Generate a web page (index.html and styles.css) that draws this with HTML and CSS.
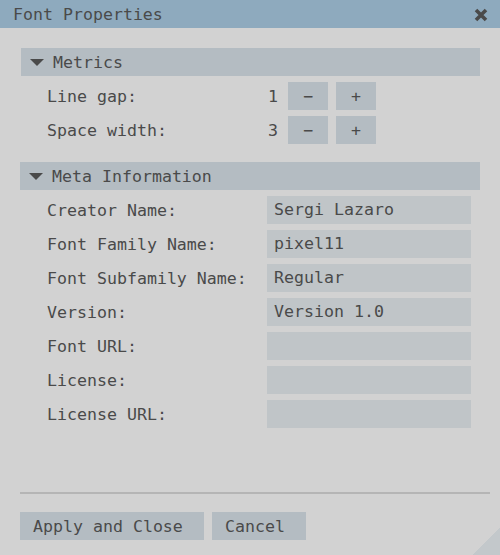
FILE: index.html
```html
<!DOCTYPE html>
<html lang="en">

<head>
    <meta charset="UTF-8">
    <meta name="viewport" content="width=device-width, initial-scale=1.0">
    <title>Font Properties</title>
    <link rel="stylesheet" href="styles.css">
</head>

<body>

    <div class="dialog">

        <!-- Title bar -->
        <div class="titlebar">
            <span class="title">Font Properties</span>
            <svg class="close" width="14" height="14" viewBox="0 0 14 14">
                <path d="M2 2 L12 12 M12 2 L2 12" stroke="#4a4a4a" stroke-width="3.6" fill="none" />
            </svg>
        </div>

        <div class="content">

            <!-- Metrics -->
            <section class="group group-metrics">
                <div class="group-head">
                    <svg class="arrow" width="14" height="7" viewBox="0 0 14 7"><polygon points="0,0 14,0 7,7" fill="#4a4a4a" /></svg>
                    <span>Metrics</span>
                </div>
                <div class="rows">
                    <div class="row">
                        <span class="label">Line gap:</span>
                        <div class="stepper">
                            <span class="num">1</span>
                            <button class="btn btn-step">&minus;</button>
                            <button class="btn btn-step">+</button>
                        </div>
                    </div>
                    <div class="row">
                        <span class="label">Space width:</span>
                        <div class="stepper">
                            <span class="num">3</span>
                            <button class="btn btn-step">&minus;</button>
                            <button class="btn btn-step">+</button>
                        </div>
                    </div>
                </div>
            </section>

            <!-- Meta information -->
            <section class="group group-meta">
                <div class="group-head">
                    <svg class="arrow" width="14" height="7" viewBox="0 0 14 7"><polygon points="0,0 14,0 7,7" fill="#4a4a4a" /></svg>
                    <span>Meta Information</span>
                </div>
                <div class="rows">
                    <div class="row"><span class="label">Creator Name:</span><div class="field">Sergi Lazaro</div></div>
                    <div class="row"><span class="label">Font Family Name:</span><div class="field">pixel11</div></div>
                    <div class="row"><span class="label">Font Subfamily Name:</span><div class="field">Regular</div></div>
                    <div class="row"><span class="label">Version:</span><div class="field">Version 1.0</div></div>
                    <div class="row"><span class="label">Font URL:</span><div class="field"></div></div>
                    <div class="row"><span class="label">License:</span><div class="field"></div></div>
                    <div class="row"><span class="label">License URL:</span><div class="field"></div></div>
                </div>
            </section>
        </div>

        <!-- Footer -->
        <div class="footer">
            <div class="separator"></div>
            <div class="actions">
                <button class="btn btn-apply">Apply and Close</button>
                <button class="btn btn-cancel">Cancel</button>
            </div>
        </div>

        <div class="grip"></div>
    </div>

</body>
</html>
```

FILE: styles.css
```css
:root {
    --bg:       #d2d2d2;
    --title:    #8eaabe;
    --head:     #b4bcc2;
    --field:    #c0c5c8;
    --line:     #b5b5b5;
    --text:     #4a4a4a;
}

* {
    box-sizing: border-box;
    margin: 0;
    padding: 0;
}

body {
    background: var(--bg);
    color: var(--text);
    font-family: 'DejaVu Sans Mono', monospace;
    font-size: 16.6px;
    overflow: hidden;
}

.dialog {
    position: relative;
    display: flex;
    flex-direction: column;
    width: 500px;
    height: 555px;
}

/* ── Title bar ── */
.titlebar {
    display: flex;
    align-items: center;
    justify-content: space-between;
    height: 28px;
    padding: 0 12px 0 13px;
    background: var(--title);
}

.close {
    display: block;
    margin-top: 1px;
}

/* ── Groups ── */
.content {
    flex: 1;
    padding: 20px 20px 0 20px;
}

.group-metrics .group-head {
    margin-left: 1px;
}

.group-meta {
    margin-top: 18px;
}

.group-head {
    display: flex;
    align-items: center;
    gap: 9px;
    height: 28px;
    padding-left: 9px;
    background: var(--head);
}

.arrow {
    display: block;
}

.rows {
    display: flex;
    flex-direction: column;
    gap: 6px;
    margin-top: 6px;
}

.row {
    display: grid;
    grid-template-columns: 220px 204px;
    align-items: center;
    height: 28px;
    padding-left: 27px;
}

.stepper {
    display: flex;
    align-items: center;
    gap: 8px;
    height: 28px;
}

.num {
    width: 13px;
    padding-left: 1px;
}

/* ── Buttons ── */
.btn {
    height: 28px;
    border: none;
    background: var(--head);
    color: var(--text);
    font: inherit;
}

.btn-step {
    width: 40px;
}

.field {
    height: 28px;
    line-height: 28px;
    padding-left: 7px;
    background: var(--field);
}

/* ── Footer ── */
.footer {
    padding: 0 10px 15px 20px;
}

.separator {
    height: 2px;
    background: var(--line);
}

.actions {
    display: flex;
    gap: 8px;
    margin-top: 18px;
}

.btn-apply,
.btn-cancel {
    text-align: left;
    padding: 0 13px;
}

.btn-apply  { width: 184px; }
.btn-cancel { width: 94px; }

/* Esquina de redimensionado */
.grip {
    position: absolute;
    right: 0;
    bottom: 0;
    width: 27px;
    height: 27px;
    background: linear-gradient(135deg, transparent 50%, #c3c8cb 50%);
}
```
